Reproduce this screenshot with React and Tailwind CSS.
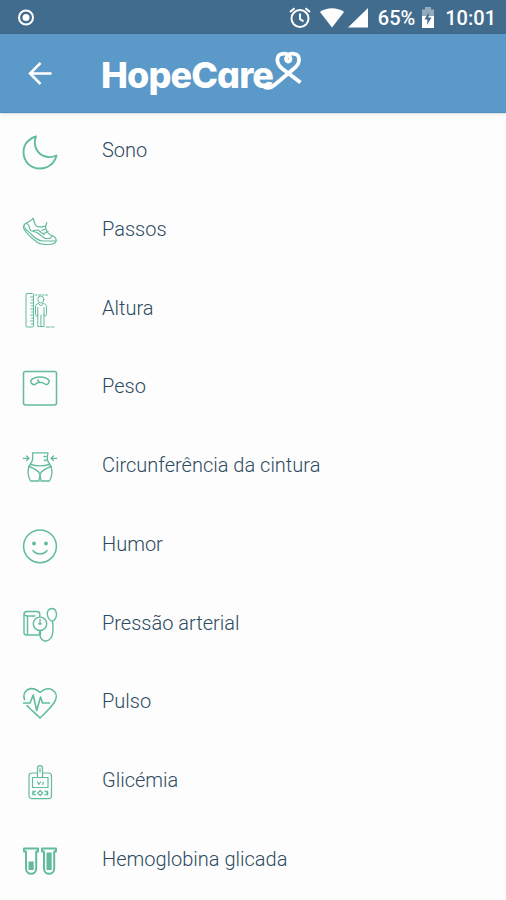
import React from 'react';

function Icon({ width = 1.5, children }) {
  return (
    <svg
      aria-hidden="true"
      className="size-9 shrink-0 text-[#62bb9f]"
      viewBox="0 0 36 36"
      fill="none"
      stroke="currentColor"
      strokeWidth={width}
      strokeLinecap="round"
      strokeLinejoin="round"
    >
      {children}
    </svg>
  );
}

const Moon = () => (
  <Icon width={1.9}>
    <path d="M14 2.300C6.500 4.500 1.500 10.500 1.500 18C1.500 27.500 8.500 34.500 18 34.500C26 34.500 32.500 29.500 34.500 21.500C31 23 28 23.500 24.500 22.800C15.500 21 10.500 12 14 2.300Z" />
  </Icon>
);

const Shoe = () => (
  <Icon width={1.2}>
    <path d="M10.800 5.500C9 8.500 5.500 8.500 3 11C1.500 12.500 1.300 14.500 2 16C5 21.500 10 25.500 15.500 29.500C18 31.200 21 31.500 26 31.500C31 31.500 34 30.500 34.200 27.500C34.300 25 32.500 23.300 29 22C25 20.500 24 17 23.500 13.500L24.800 9.500" />
    <path d="M10.800 5.500C12.500 7.500 12 11 14.500 13C17.500 15 21 13.500 23.500 13" />
    <path d="M2 14C4 17 7 19 10 22C14 26 17 28 21 28H34" />
    <path d="M5 10.500C8 12 7 15 8.500 17.500L15 19.500L23 25.500H28L30 23M11.500 17.500L16 17L22 21.500M20 17.500L23.500 16M22 20.500L26 18.500" />
  </Icon>
);

const Height = () => (
  <Icon width={1}>
    <rect x="4" y="1.500" width="7.500" height="33.500" rx="1" />
    <path d="M8.500 5H11M9.500 8H11M8.500 11H11M9.500 14H11M8.500 17H11M9.500 20H11M8.500 23H11M9.500 26H11M8.500 29H11M9.500 32H11" />
    <path d="M13 3H26" strokeDasharray="2 1.5" />
    <path d="M24 35H32" strokeDasharray="4 1.5" />
    <ellipse cx="18.800" cy="7.500" rx="3" ry="3.500" />
    <path d="M16.500 11.500C14 12 13.500 13 13.500 15V22.500C13.500 24.500 15.500 24.500 15.800 23V15.500M21 11.500C24 12 24.500 13 24.500 15V22.500C24.500 24.500 22.300 24.500 22 23V15.500M16.500 11.500L18.800 14L21 11.500M15.800 22V34.500H22V22M18.900 23V34.500" />
  </Icon>
);

const Scale = () => (
  <Icon width={1.5}>
    <rect x="1.500" y="1.500" width="33" height="33.500" rx="2" />
    <path d="M8.800 10.500C13 5.800 23 5.800 27.200 10.500C27.500 12.500 25.500 15 23.800 14.500C22.500 14 22 12.700 19.500 12.500H16.500C14 12.700 13.500 15 12 14.800C10 14.500 8.500 12.500 8.800 10.500ZM17.500 12.500L15.800 10" />
  </Icon>
);

const Waist = () => (
  <Icon width={1.3}>
    <path d="M10.500 3.800H26C25.300 7 24.800 10 26 12.500C28.500 16 30.300 19.500 30 24C29.800 27.500 28.500 30 27.500 32H19L18 25L17 32H8.500C7.500 30 6.200 27.500 6 24C5.700 19.500 7.500 16 10 12.500C11.200 10 10.700 7 10.500 3.800Z" />
    <path d="M8.500 15.500C14 17 22 17 27.500 15.500M6.500 17.500C12 19 16 21.500 18 25C20 21.500 24 19 29.500 17.500M22.500 11.500L24.500 11M22 7.500H24" />
    <path d="M1.200 9.300H6.500M4.500 7L7 9.300L4.500 11.600M34.800 9.300H29.500M31.500 7L29 9.300L31.500 11.600" />
  </Icon>
);

const Mood = () => (
  <Icon width={1.500}>
    <circle cx="18" cy="18.300" r="16.400" />
    <circle cx="12" cy="15.500" r="1.900" fill="currentColor" stroke="none" />
    <circle cx="24" cy="15.500" r="1.900" fill="currentColor" stroke="none" />
    <path d="M11 22.500C14 27 22 27 25 22.500" />
  </Icon>
);

const Pressure = () => (
  <Icon width={1.4}>
    <path d="M14 28H4.500C3 28 2 27 2 25.500V7C2 5.300 3.500 4.500 5 4.500H14.500C16.500 4.500 17.800 5.500 17.800 7V9.500M2 7.500C3 9 4 9 5.500 9H13M5.500 9V28M14 28H17.500V24" />
    <circle cx="18" cy="16.800" r="6.700" />
    <path d="M18 12.500V17.500M16.800 16.800H19.200M18.500 24C19 27 17.500 28 18.500 30.500C20 34.500 24.500 35 27.500 32.500C31.500 29.500 31 24 31 20L30.500 14.500" />
    <path d="M30 1.500C26.500 1.500 25 4.500 25.300 7.500C25.600 10.500 28 14 30.300 14C32.500 14 34.500 10.500 34.500 7.500C34.500 4.500 33 1.500 30 1.500Z" />
  </Icon>
);

const Pulse = () => (
  <Icon width={1.6}>
    <path d="M2.500 14.500C-.5 6.500 8.500-1 18 7.500C27.500-1 37 7 33.500 15C31.500 20.500 25 26 18 33C12.500 27.500 8 24 5 20.500" />
    <path d="M1.500 18H8L11.200 10L14.700 25.500L18.500 12L20.500 18H27.500" />
  </Icon>
);

const Glucose = () => (
  <Icon width={1.2}>
    <path d="M15 9H10C8 9 7 10 7 12V31.500C7 33.500 8.500 34.700 10.500 34.700H26.500C28.500 34.700 29.500 33.500 29.500 31.500V12C29.500 10 28.500 9 26.500 9H21" />
    <path d="M15.500 13.500V4C15.500 .7 20.500 .7 20.500 4V13.500M18 4.500V8M10.500 13.500H26V23.500H10.500ZM15.500 18L17 20.500L18.500 18M21 18V20.500" />
    <path d="M18.200 26.500L20.700 29L18.200 31.500L15.700 29ZM13.500 27L10.500 29L13.500 31M23 27L26 29L23 31M11 27V31M25.500 27V31" />
  </Icon>
);

const Tubes = () => (
  <Icon width={2}>
    <path d="M2 5.500H16V8.500H14.200V25.500C14.200 32.500 4 32.500 4 25.500V8.500H2ZM20 5.500H34V8.500H32.200V25.500C32.200 32.500 22 32.500 22 25.500V8.500H20Z" />
    <path d="M6.500 18.500H11.700V27H6.500ZM24.500 9.500H29.700V27H24.500Z" fill="currentColor" stroke="none" />
  </Icon>
);

const items = [
  ['sono', 'Sono', Moon],
  ['passos', 'Passos', Shoe],
  ['altura', 'Altura', Height],
  ['peso', 'Peso', Scale],
  ['cintura', 'Circunferência da cintura', Waist],
  ['humor', 'Humor', Mood],
  ['pressao', 'Pressão arterial', Pressure],
  ['pulso', 'Pulso', Pulse],
  ['glicemia', 'Glicémia', Glucose],
  ['hemoglobina', 'Hemoglobina glicada', Tubes],
];

function StatusBar() {
  return (
    <div className="flex h-[34px] shrink-0 items-center justify-between bg-[#426c8d] pt-0.5 pr-2.5 pl-4 text-white">
      <svg aria-hidden="true" className="size-5" viewBox="0 0 20 20" fill="none">
        <circle cx="10" cy="9.500" r="7" stroke="currentColor" strokeWidth="2" />
        <circle cx="10" cy="9.500" r="3.500" fill="currentColor" />
      </svg>
      <div className="flex items-center">
        <svg aria-hidden="true" className="h-6 w-6" viewBox="0 0 24 24" fill="none" stroke="currentColor" strokeWidth="2">
          <circle cx="12" cy="12.500" r="8.500" />
          <path d="M12 7.500V13L15.500 15.500M2 6L6.500 2.200M22 6L17.500 2.200" />
        </svg>
        <svg aria-hidden="true" className="ml-2 h-5 w-6" viewBox="0 0 24 20" fill="currentColor">
          <path d="M0 4C7-1 17-1 24 4L12 19.500Z" />
        </svg>
        <svg aria-hidden="true" className="ml-1 h-5 w-5" viewBox="0 0 20 20" fill="currentColor">
          <path d="M20 0V19.500H0Z" />
        </svg>
        <span className="ml-2.5 text-xl font-medium">65%</span>
        <svg aria-hidden="true" className="ml-1.5 h-6 w-3.5" viewBox="0 0 14 24">
          <path d="M4 1H10V3.500H13V11H1V3.500H4Z" fill="#93abbc" />
          <path d="M1 10H13V22H1Z" fill="#fff" />
          <path d="M8 6L3.500 13.500H6.500L6 19L10.500 11.500H7.500Z" fill="#426c8d" />
        </svg>
        <span className="ml-2.5 text-xl font-medium">10:01</span>
      </div>
    </div>
  );
}

function Logo() {
  return (
    <h1 className="relative flex items-baseline pt-1 font-[Inter,sans-serif] text-4xl leading-10 font-extrabold tracking-tight [font-feature-settings:'cv11']">
      HopeCare
      <svg
        aria-hidden="true"
        className="absolute -right-8 bottom-0 h-12 w-12"
        viewBox="0 0 48 48"
        fill="none"
        stroke="currentColor"
        strokeWidth="3.800"
        strokeLinecap="butt"
      >
        <path d="M43.500 35.500L25 21.500C18.500 16 19 7.500 25.500 6.800C29.500 6.300 33 8 33.500 11.500C34 15.500 28.500 15.500 29 11.500C29.500 8 33 6.300 37 6.800C43.500 7.500 44 16 37 21.500L17.500 38C14.500 40.700 11 41.500 7 40" />
      </svg>
    </h1>
  );
}

export default function App() {
  return (
    <div className="flex min-h-screen flex-col bg-[#fdfdfd] font-[Roboto,sans-serif]">
      <StatusBar />
      <header className="flex h-[79px] shrink-0 items-center border-b border-[#4a8fc0] bg-[#5b99c9] pl-6 text-white shadow-sm">
        <button type="button" aria-label="Voltar" className="mr-[45px] size-8">
          <svg aria-hidden="true" className="size-8" viewBox="0 0 32 32" fill="none" stroke="currentColor" strokeWidth="2.500">
            <path d="M27.500 16.500H6M16.500 6L6 16.500L16.500 27" />
          </svg>
        </button>
        <Logo />
      </header>
      <main className="flex flex-1 flex-col">
        <ul className="grid flex-1 auto-rows-fr">
          {items.map(([id, label, Glyph]) => (
            <li key={id} className="flex">
              <a href={`#${id}`} className="flex flex-1 items-center gap-11 px-[22px] text-xl font-light text-[#2c4a60]">
                <Glyph />
                <span className="pb-1">{label}</span>
              </a>
            </li>
          ))}
        </ul>
      </main>
    </div>
  );
}
